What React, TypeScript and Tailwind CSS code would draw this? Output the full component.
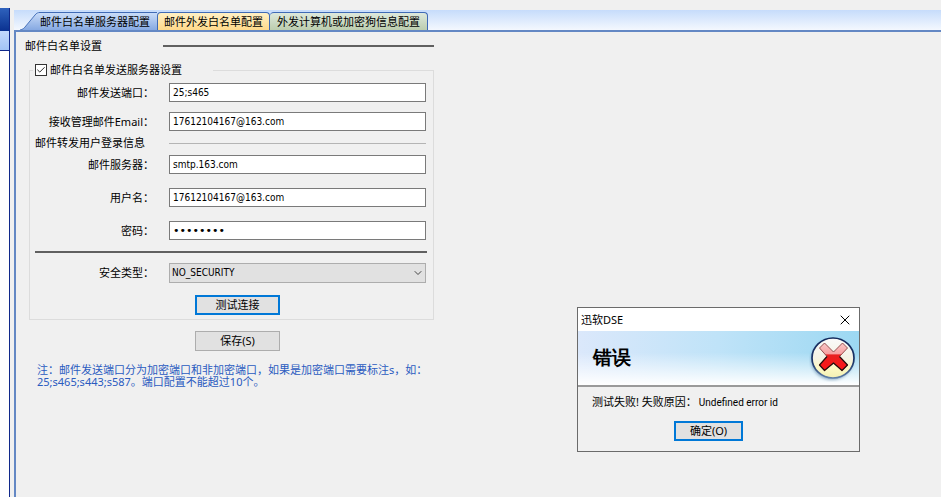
import { useState } from "react";
import type { InputHTMLAttributes } from "react";
import clsx from "clsx";
import { Check, ChevronDown, X } from "lucide-react";

const tabs = [
  { id: "server", label: "邮件白名单服务器配置" },
  { id: "outgoing", label: "邮件外发白名单配置" },
  { id: "dongle", label: "外发计算机或加密狗信息配置" },
];

const tabStyles: Record<string, string> = {
  server: "-ml-px pl-px pr-[7px] from-[#c9dcf8] to-[#86a9e2]",
  outgoing: "border-x px-[6px] rounded-t from-[#fff0c4] to-[#ffd98a]",
  dongle: "border-r px-[7px] rounded-t from-[#dde8dc] to-[#bccdae]",
};

const buttonBase = "flex h-5 items-center justify-center bg-[#e1e1e1] text-[11px] leading-3";

function Field({ id, label, ...props }: { id: string; label: string } & InputHTMLAttributes<HTMLInputElement>) {
  return (
    <div className="flex items-center">
      <label htmlFor={id} className="w-[124px] shrink-0 text-right">
        {label}
      </label>
      <input
        id={id}
        className={clsx(
          "ml-[15px] h-[19px] min-w-0 flex-1 border border-[#7a7a7a] bg-white px-[3px] outline-none",
          props.type === "password"
            ? "font-['DejaVu_Sans',sans-serif] text-[11px]"
            : "font-['DejaVu_Sans_Condensed','Noto_Sans',sans-serif] text-[10px]",
        )}
        {...props}
      />
    </div>
  );
}

function ErrorIcon() {
  return (
    <svg viewBox="0 0 48 48" className="h-12 w-12" aria-hidden="true">
      <defs>
        <linearGradient id="disc" x1="0" y1="0" x2="0" y2="1">
          <stop offset="0" stopColor="#fafafa" />
          <stop offset="0.5" stopColor="#f4f2e4" />
          <stop offset="0.75" stopColor="#fdf9c4" />
          <stop offset="1" stopColor="#f2f0b4" />
        </linearGradient>
        <linearGradient id="rim" x1="0" y1="0" x2="0" y2="1">
          <stop offset="0" stopColor="#142a5c" />
          <stop offset="0.6" stopColor="#1b3468" />
          <stop offset="1" stopColor="#5f7fa8" />
        </linearGradient>
        <linearGradient id="cross" x1="0" y1="0" x2="0" y2="1">
          <stop offset="0" stopColor="#f9c8c8" />
          <stop offset="0.4" stopColor="#f7a0a0" />
          <stop offset="0.43" stopColor="#e82020" />
          <stop offset="1" stopColor="#ff1616" />
        </linearGradient>
        <filter id="shade" x="-20%" y="-20%" width="140%" height="140%">
          <feGaussianBlur stdDeviation="1.5" />
        </filter>
      </defs>
      <ellipse cx="23" cy="26" rx="21" ry="20" fill="#3f6f98" opacity="0.5" filter="url(#shade)" />
      <ellipse cx="24" cy="24" rx="21" ry="20" fill="url(#disc)" stroke="url(#rim)" strokeWidth="1.7" />
      <path
        d="M15.5 9 L24.5 18 L33.5 9 L38.5 14 L30.5 22.5 L38.5 31 L33 36.5 L24.5 29 L15.5 36.5 L10.5 31 L18 22.5 L10.5 14 Z"
        fill="url(#cross)"
        stroke="#8a4040"
        strokeWidth="0.9"
        strokeLinejoin="round"
      />
      <path
        d="M18 22.5 L10.5 31 L15.5 36.5 L24.5 29 L33 36.5 L38.5 31 L30.5 22.5"
        fill="none"
        stroke="#2a0c0c"
        strokeWidth="1.2"
        strokeLinejoin="round"
      />
    </svg>
  );
}

function ErrorDialog({ onClose }: { onClose: () => void }) {
  return (
    <div
      role="dialog"
      aria-labelledby="dialog-title"
      className="absolute left-[577px] top-[307px] w-[283px] border border-[#6b6b6b] bg-[#f0f0f0]"
    >
      <div className="flex h-[23px] items-center justify-between bg-white pl-[3px] pr-[6px]">
        <span id="dialog-title">迅软DSE</span>
        <button type="button" aria-label="关闭" onClick={onClose}>
          <X className="h-4 w-4" strokeWidth={1.5} />
        </button>
      </div>
      <div className="relative flex h-14 items-center justify-between border-b-2 border-[#9a9a9a] bg-linear-to-r from-[#dbe8fb] via-[#bfe3f8] to-[#9cd8f2] pl-[15px] pr-[2px]">
        <div className="absolute inset-0 bg-linear-to-b from-transparent from-40% to-white" />
        <h2 className="relative font-serif text-[19px] font-bold leading-6">错误</h2>
        <div className="relative">
          <ErrorIcon />
        </div>
      </div>
      <p className="mt-2 pl-[14px]">
        测试失败! 失败原因：<span className="ml-[2px] font-['Roboto',sans-serif] text-[10px]">Undefined error id</span>
      </p>
      <div className="flex justify-center pb-[10px] pr-5 pt-[11px]">
        <button
          type="button"
          onClick={onClose}
          className={clsx(buttonBase, "w-[69px] border-2 border-[#0078d7]")}
        >
          确定(O)
        </button>
      </div>
    </div>
  );
}

export default function App() {
  const [active, setActive] = useState("server");
  const [enabled, setEnabled] = useState(true);
  const [dialogOpen, setDialogOpen] = useState(true);

  return (
    <div className="relative flex min-h-screen bg-[#f0f0f0] pt-2 font-['Noto_Sans','Noto_Sans_CJK_SC',sans-serif] text-[11px] leading-[14px] text-black">
      <aside className="w-[10px] shrink-0 border-r border-[#10288a] bg-white">
        <div className="h-[23px] bg-linear-to-b from-[#2f62bd] to-[#0b3190]" />
        <div className="h-5 border-b border-[#10288a] bg-linear-to-b from-[#c4dafc] to-[#a3c4f5]" />
      </aside>

      <main className="ml-1 mt-[2px] flex-1">
        <nav className="flex h-[22px] items-end border-b-2 border-[#6488c4] bg-linear-to-b from-[#c6dcfb] to-[#f4f8fe] pl-[6px]">
          <svg viewBox="0 0 20 18" className="h-[18px] w-5 shrink-0" aria-hidden="true">
            <defs>
              <linearGradient id="slope" x1="0" y1="0" x2="0" y2="1">
                <stop offset="0" stopColor="#c9dcf8" />
                <stop offset="1" stopColor="#86a9e2" />
              </linearGradient>
            </defs>
            <path d="M0 18 C3 17.5 4 16 5 15 L15 3 C16.5 1 18 0.5 20 0.5 V18 Z" fill="url(#slope)" />
            <path d="M0 18 C3 17.5 4 16 5 15 L15 3 C16.5 1 18 0.5 20 0.5" fill="none" stroke="#4a74bb" />
          </svg>
          {tabs.map((tab) => (
            <button
              key={tab.id}
              type="button"
              aria-pressed={active === tab.id}
              onClick={() => setActive(tab.id)}
              className={clsx(
                "h-[18px] whitespace-nowrap border-t border-[#3f6ab5] bg-linear-to-b",
                tabStyles[tab.id],
              )}
            >
              {tab.label}
            </button>
          ))}
        </nav>

        <form
          className="min-h-[465px] border-l-2 border-[#6488c4] pl-[9px] pt-[7px]"
          onSubmit={(e) => e.preventDefault()}
        >
          <div className="flex max-w-[409px] items-center">
            <h1 className="w-[138px] shrink-0">邮件白名单设置</h1>
            <div className="h-[2px] flex-1 bg-[#606060]" />
          </div>

          <fieldset className="ml-1 mt-[10px] max-w-[405px] border border-[#dcdcdc] pb-1">
            <legend className="ml-[3px] w-[180px] pl-[2px]">
              <label className="flex items-center gap-[3px]">
                <span className="relative h-3 w-3">
                  <input
                    type="checkbox"
                    checked={enabled}
                    onChange={(e) => setEnabled(e.target.checked)}
                    className="block h-3 w-3 appearance-none border border-[#333] bg-white"
                  />
                  {enabled && <Check className="pointer-events-none absolute inset-0 h-3 w-3 p-px" strokeWidth={2} />}
                </span>
                邮件白名单发送服务器设置
              </label>
            </legend>

            <div className="pr-[7px] pt-[6px]">
              <div className="flex flex-col gap-[10px]">
                <Field id="port" label="邮件发送端口：" defaultValue="25;s465" />
                <Field id="email" label="接收管理邮件Email：" defaultValue="17612104167@163.com" />
              </div>

              <div className="flex h-6 items-center pl-[5px]">
                <h2 className="w-[134px] shrink-0">邮件转发用户登录信息</h2>
                <div className="h-px flex-1 bg-[#b4b4b4]" />
              </div>

              <div className="flex flex-col gap-[14px]">
                <Field id="smtp" label="邮件服务器：" defaultValue="smtp.163.com" />
                <Field id="user" label="用户名：" defaultValue="17612104167@163.com" />
                <Field id="password" label="密码：" type="password" defaultValue="88888888" />
              </div>

              <div className="-mr-px ml-[5px] mt-[11px] h-[2px] bg-[#606060]" />

              <div className="mt-[10px] flex items-center">
                <label htmlFor="security" className="w-[124px] shrink-0 text-right">
                  安全类型：
                </label>
                <div className="relative ml-[15px] flex-1">
                  <select
                    id="security"
                    className="block h-5 w-full appearance-none border border-[#adadad] bg-[#e1e1e1] px-[2px] font-['DejaVu_Sans_Condensed','Noto_Sans',sans-serif] text-[10px] outline-none"
                  >
                    <option>NO_SECURITY</option>
                  </select>
                  <ChevronDown className="pointer-events-none absolute right-[2px] top-1 h-3 w-3 text-[#444]" />
                </div>
              </div>
            </div>

            <div className="mt-3 pl-[165px]">
              <button
                type="button"
                onClick={() => setDialogOpen(true)}
                className={clsx(buttonBase, "w-[85px] border-2 border-[#0078d7]")}
              >
                测试连接
              </button>
            </div>
          </fieldset>

          <div className="mt-[11px] pl-[170px]">
            <button type="submit" className={clsx(buttonBase, "w-[85px] border border-[#adadad]")}>
              保存(S)
            </button>
          </div>

          <p className="ml-3 mt-[13px] max-w-[400px] leading-3 text-[#2a5bc0]">
            注：邮件发送端口分为加密端口和非加密端口，如果是加密端口需要标注s，如：25;s465;s443;s587。端口配置不能超过10个。
          </p>
        </form>
      </main>

      {dialogOpen && <ErrorDialog onClose={() => setDialogOpen(false)} />}
    </div>
  );
}
